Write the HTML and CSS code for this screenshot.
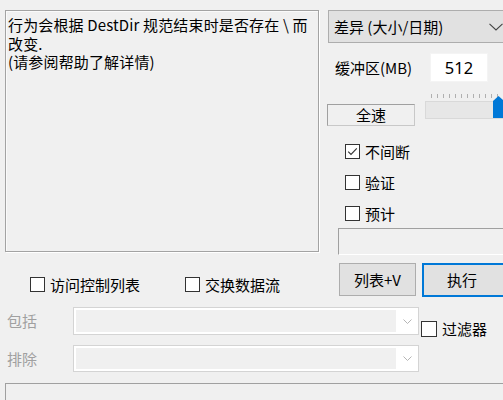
FILE: index.html
```html
<!DOCTYPE html>
<html lang="zh-CN">
<head>
<meta charset="utf-8">
<title>FastCopy</title>
<link rel="stylesheet" href="styles.css">
</head>
<body>
<div class="win">
  <div class="top">
    <div class="leftcol">
      <div class="memo"><div class="ln">行为会根据 DestDir 规范结束时是否存在 \ 而</div><div class="ln">改变.</div><div class="ln">(请参阅帮助了解详情)</div></div>
      <div class="opts">
        <label class="chk acl"><span class="box"></span>访问控制列表</label>
        <label class="chk ads"><span class="box"></span>交换数据流</label>
      </div>
    </div>
    <div class="rightcol">
      <div class="mode">
        <span class="mode-text">差异 (大小/日期)</span>
        <svg class="chev" width="14" height="8" viewBox="0 0 14 8"><path d="M0.5 0.8 L7 7 L13.5 0.8" fill="none" stroke="#444" stroke-width="1.1"/></svg>
      </div>
      <div class="bufrow">
        <span class="buflabel">缓冲区(MB)</span>
        <div class="num">512</div>
      </div>
      <div class="speedrow">
        <div class="speed">全速</div>
        <div class="slider">
          <div class="ticks"><i></i><i></i><i></i><i></i><i></i><i></i><i></i><i></i><i></i><i></i><i></i><i></i></div>
          <div class="track"></div>
          <svg class="thumb" width="11" height="22" viewBox="0 0 11 22"><path d="M0 5 L5.5 0 L11 5 L11 22 L0 22 Z" fill="#0078d7"/></svg>
        </div>
      </div>
      <div class="checks">
        <label class="chk"><span class="box"><svg width="13" height="13" viewBox="0 0 13 13"><path d="M2.2 6.6 L5 9.4 L10.8 3.4" fill="none" stroke="#333" stroke-width="1.1"/></svg></span>不间断</label>
        <label class="chk"><span class="box"></span>验证</label>
        <label class="chk"><span class="box"></span>预计</label>
      </div>
      <div class="blank"></div>
      <div class="btns">
        <div class="btn list">列表+V</div>
        <div class="btn run">执行</div>
      </div>
    </div>
  </div>
  <div class="filters">
    <span class="flabel">包括</span>
    <div class="fcombo"><div class="field"></div><div class="farrow"><svg width="9" height="5" viewBox="0 0 9 5"><path d="M0.5 0.5 L4.5 4.5 L8.5 0.5" fill="none" stroke="#b5b5b5" stroke-width="1"/></svg></div></div>
    <label class="chk fchk"><span class="box"></span>过滤器</label>
    <span class="flabel">排除</span>
    <div class="fcombo"><div class="field"></div><div class="farrow"><svg width="9" height="5" viewBox="0 0 9 5"><path d="M0.5 0.5 L4.5 4.5 L8.5 0.5" fill="none" stroke="#b5b5b5" stroke-width="1"/></svg></div></div>
  </div>
  <div class="status"></div>
</div>
</body>
</html>
```
FILE: styles.css
```css
html, body {
  margin: 0;
  padding: 0;
  background: #f0f0f0;
}
body {
  width: 503px;
  height: 400px;
  overflow: hidden;
  font-family: "Noto Sans CJK SC", "Noto Sans", sans-serif;
  font-size: 15px;
  color: #000;
}
.win {
  width: 503px;
  height: 400px;
  overflow: hidden;
}
.top {
  display: flex;
  height: 296px;
  padding-top: 10px;
  box-sizing: border-box;
}
.leftcol {
  width: 314px;
  margin-left: 5px;
  flex: none;
}
.memo {
  height: 242px;
  box-sizing: border-box;
  border: 1px solid #a3a3a3;
  box-shadow: 1px 1px 0 #fff, inset 1px 1px 0 #fafafa;
  padding: 5px 0 0 2px;
  white-space: nowrap;
  overflow: hidden;
  letter-spacing: 0.15px;
}
.ln {
  height: 18.5px;
  line-height: 18.5px;
}
.opts {
  display: flex;
  margin-top: 25px;
  padding-left: 25px;
  height: 15px;
}
.chk {
  display: flex;
  align-items: center;
  height: 15px;
  line-height: 15px;
  white-space: nowrap;
}
.box {
  width: 15px;
  height: 15px;
  box-sizing: border-box;
  border: 1px solid #333;
  background: #fff;
  margin-right: 5px;
  flex: none;
  display: flex;
}
.box svg { display: block; }
.acl { width: 155px; }
.rightcol {
  width: 200px;
  margin-left: 8px;
  flex: none;
}
.mode {
  margin-left: 1px;
  height: 33px;
  width: 184px;
  box-sizing: border-box;
  border: 1px solid #adadad;
  background: #e1e1e1;
  display: flex;
  align-items: center;
  justify-content: space-between;
  padding: 0 8px 0 5px;
}
.mode-text { line-height: 20px; }
.chev { display: block; margin-top: 1px; }
.bufrow {
  display: flex;
  align-items: center;
  margin-top: 10px;
  height: 29px;
}
.buflabel {
  width: 95px;
  padding-left: 8px;
  flex: none;
}
.num {
  width: 58px;
  height: 29px;
  box-sizing: border-box;
  background: #fff;
  border: 1px solid #f4f4f4;
  text-align: center;
  line-height: 27px;
  font-family: "Noto Sans", "Noto Sans CJK SC", sans-serif;
  font-size: 16.5px;
}
.speedrow {
  display: flex;
  margin-top: 10px;
  height: 34px;
}
.speed {
  align-self: flex-end;
  width: 88px;
  height: 22px;
  box-sizing: border-box;
  border: 1px solid #a0a0a0;
  border-right-color: #c8c8c8;
  border-bottom-color: #c8c8c8;
  text-align: center;
  line-height: 20px;
}
.slider {
  position: relative;
  margin-left: 10px;
  width: 90px;
  height: 34px;
}
.ticks {
  display: flex;
  gap: 5px;
  padding-left: 6px;
  padding-top: 2px;
  height: 5px;
}
.ticks i {
  width: 1px;
  height: 4px;
  background: #b0b0b0;
}
.track {
  margin-top: 2px;
  height: 16px;
  background: #e7e7e7;
  border: 1px solid #d9d9d9;
  border-right: none;
}
.thumb {
  position: absolute;
  left: 68px;
  top: 4px;
  display: block;
}
.checks {
  display: flex;
  flex-direction: column;
  gap: 16px;
  margin-top: 18px;
  padding-left: 18px;
}
.blank {
  margin-top: 7px;
  margin-left: 11px;
  height: 27px;
  box-sizing: border-box;
  border: 1px solid #a0a0a0;
  border-right: none;
  border-bottom-color: #fff;
}
.btns {
  display: flex;
  gap: 6px;
  margin-top: 8px;
  margin-left: 12px;
}
.btn {
  height: 33px;
  box-sizing: border-box;
  background: #e1e1e1;
  border: 1px solid #adadad;
  text-align: center;
  line-height: 31px;
}
.btn.list { width: 77px; }
.btn.run {
  width: 90px;
  border: 2px solid #0078d7;
  line-height: 29px;
  height: 34px;
  padding-right: 10px;
}
.filters {
  display: grid;
  grid-template-columns: 68px 346px auto;
  grid-template-rows: 28px 27px;
  row-gap: 10px;
  margin-top: 11px;
  margin-left: 5px;
}
.flabel {
  color: #a0a0a0;
  padding-left: 2px;
  align-self: center;
  line-height: 20px;
}
.fcombo {
  display: flex;
  box-sizing: border-box;
  border: 1px solid #d4d4d4;
  background: #fff;
  padding: 2px 0 2px 2px;
}
.field {
  flex: 1;
  background: #f0f0f0;
}
.farrow {
  width: 22px;
  display: flex;
  align-items: center;
  justify-content: center;
}
.farrow svg { display: block; }
.fchk {
  align-self: start;
  margin-top: 14px;
  margin-left: 2px;
}
.fchk .box { width: 16px; height: 16px; }
.status {
  margin-top: 11px;
  margin-left: 5px;
  height: 30px;
  border: 1px solid #a0a0a0;
  border-right: none;
  border-bottom: none;
}
```
